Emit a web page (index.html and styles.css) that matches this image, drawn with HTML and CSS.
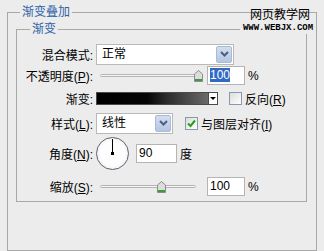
FILE: index.html
```html
<!DOCTYPE html>
<html lang="zh-CN">
<head>
<meta charset="UTF-8" />
<title>渐变叠加</title>
<link rel="stylesheet" href="styles.css">
</head>
<body>
<fieldset class="group outer">
  <legend>渐变叠加</legend>
  <fieldset class="group inner">
    <legend>渐变</legend>

    <div class="row row-blend">
      <span class="lbl">混合模式:</span>
      <div class="select select-blend">
        <span class="select-text">正常</span>
        <span class="drop"><svg width="9" height="6" viewBox="0 0 9 6"><path d="M1 1 L4.5 4.5 L8 1" fill="none" stroke="#4d5f80" stroke-width="2"/></svg></span>
      </div>
    </div>

    <div class="row row-opacity">
      <span class="lbl">不透明度(<u>P</u>):</span>
      <div class="slider">
        <div class="track"></div>
        <svg class="thumb" style="left:98px" width="9" height="12" viewBox="0 0 9 12">
          <path d="M0.5 4 L4.5 0.5 L8.5 4 L8.5 11.5 L0.5 11.5 Z" fill="#dcdcdc" stroke="#8c8c8c"/>
          <rect x="1" y="9" width="7" height="2" fill="#3c9c3c"/>
        </svg>
      </div>
      <div class="textbox"><span class="sel">100</span></div>
      <span class="unit">%</span>
    </div>

    <div class="row row-gradient">
      <span class="lbl">渐变:</span>
      <div class="swatch"></div>
      <div class="swatch-drop"><span class="tri"></span></div>
      <span class="check"></span>
      <span class="check-label">反向(<u>R</u>)</span>
    </div>

    <div class="row row-style">
      <span class="lbl">样式(<u>L</u>):</span>
      <div class="select select-style">
        <span class="select-text">线性</span>
        <span class="drop"><svg width="9" height="6" viewBox="0 0 9 6"><path d="M1 1 L4.5 4.5 L8 1" fill="none" stroke="#4d5f80" stroke-width="2"/></svg></span>
      </div>
      <span class="check checked"><svg width="11" height="11" viewBox="0 0 11 11"><path d="M2 5.5 L4.5 8 L9 2.5" fill="none" stroke="#22a022" stroke-width="2"/></svg></span>
      <span class="check-label">与图层对齐(<u>I</u>)</span>
    </div>

    <div class="row row-angle">
      <span class="lbl">角度(<u>N</u>):</span>
      <div class="dial"><span class="hand"></span><span class="pivot"></span></div>
      <div class="textbox angle-box">90</div>
      <span class="unit">度</span>
    </div>

    <div class="row row-scale">
      <span class="lbl">缩放(<u>S</u>):</span>
      <div class="slider">
        <div class="track"></div>
        <svg class="thumb" style="left:61px" width="9" height="12" viewBox="0 0 9 12">
          <path d="M0.5 4 L4.5 0.5 L8.5 4 L8.5 11.5 L0.5 11.5 Z" fill="#dcdcdc" stroke="#8c8c8c"/>
          <rect x="1" y="9" width="7" height="2" fill="#3c9c3c"/>
        </svg>
      </div>
      <div class="textbox">100</div>
      <span class="unit">%</span>
    </div>
  </fieldset>
</fieldset>

<div class="watermark">
  <div class="wm-cn">网页教学网</div>
  <div class="wm-en">WWW.WEBJX.COM</div>
</div>
</body>
</html>
```

FILE: styles.css
```css
/* Reset & base */
* {
  box-sizing: border-box;
}
html, body {
  margin: 0;
  height: 100%;
  overflow: hidden;
}
body {
  position: relative;
  background: #ececec;
  font: 12px "Liberation Sans", "Noto Sans CJK SC", sans-serif;
  color: #000;
}

/* Group boxes */
.group {
  margin: 0;
  padding: 0;
  min-width: 0;
  border: 1px solid #a8a8a8;
}
.group > legend {
  padding: 0 2px;
  line-height: 16px;
  color: #2c62a8;
}
.outer {
  margin: 4px 0 0 7px;
  width: 310px;
  height: 247px;
}
.outer > legend {
  margin-left: 12px;
}
.inner {
  margin: 1px 0 0 8px;
  width: 291px;
  padding: 6px 0 5px;
}
.inner > legend {
  margin-left: 13px;
}

/* Rows */
.row {
  display: flex;
  align-items: center;
}
.lbl {
  width: 76px;
  margin-right: 3px;
  text-align: right;
  white-space: nowrap;
}
.row-blend { height: 22px; }
.row-opacity { height: 19px; margin-top: 1px; }
.row-gradient { height: 14px; margin-top: 6px; }
.row-style { height: 22px; margin-top: 7px; }
.row-angle { height: 35px; margin-top: 2px; }
.row-scale { height: 19px; margin-top: 6px; }

/* Select boxes */
.select {
  display: flex;
  align-items: stretch;
  height: 21px;
  background: #fff;
  border: 1px solid #b9b9b9;
}
.select-blend { width: 138px; }
.select-style { width: 77px; }
.select-text {
  flex: 1;
  padding-left: 5px;
  line-height: 19px;
}
.drop {
  width: 16px;
  margin: 1px;
  display: flex;
  align-items: center;
  justify-content: center;
  background: linear-gradient(#d3ddf0, #b5c6e2);
  border: 1px solid #a9bbd8;
  border-radius: 2px;
}

/* Sliders */
.slider {
  position: relative;
  width: 108px;
  height: 19px;
}
.track {
  position: absolute;
  left: 4px;
  top: 8px;
  width: 96px;
  height: 3px;
  background: #f6f6f6;
  border: 1px solid #b4b4b4;
  border-radius: 2px;
}
.thumb {
  position: absolute;
  top: 4px;
}

/* Text fields */
.textbox {
  width: 38px;
  height: 19px;
  margin-left: 3px;
  padding-left: 2px;
  background: #fff;
  border: 1px solid #b4b4b4;
  line-height: 17px;
}
.sel {
  background: #316ac5;
  color: #fff;
}
.angle-box {
  width: 41px;
  margin-left: 7px;
}
.unit {
  margin-left: 3px;
}

/* Gradient swatch */
.swatch {
  width: 113px;
  height: 13px;
  border: 1px solid #4a4a4a;
  background: linear-gradient(to right, #000 0%, #050505 45%, #2a2a2a 62%, #6a6a6a 100%);
}
.swatch-drop {
  width: 10px;
  height: 13px;
  margin-left: -1px;
  display: flex;
  align-items: center;
  justify-content: center;
  background: #fff;
  border: 1px solid #4a4a4a;
}
.tri {
  width: 0;
  height: 0;
  border-left: 3px solid transparent;
  border-right: 3px solid transparent;
  border-top: 3px solid #000;
}

/* Checkboxes */
.check {
  width: 13px;
  height: 13px;
  margin-left: 11px;
  display: flex;
  align-items: center;
  justify-content: center;
  background: linear-gradient(135deg, #dcdcd7, #fff);
  border: 1px solid #8798b0;
}
.row-style .check {
  margin-left: 12px;
}
.check-label {
  margin-left: 3px;
  white-space: nowrap;
}

/* Angle dial */
.dial {
  position: relative;
  width: 33px;
  height: 33px;
  border: 1.5px solid #5f6270;
  border-radius: 50%;
  background: radial-gradient(circle, #fdfdfd 55%, #e2e2e2 100%);
}
.hand {
  position: absolute;
  left: 15px;
  top: 1px;
  width: 1px;
  height: 14px;
  background: #000;
}
.pivot {
  position: absolute;
  left: 14px;
  top: 14px;
  width: 3px;
  height: 3px;
  background: #000;
}

/* Watermark overlay */
.watermark {
  position: absolute;
  left: 240px;
  top: 9px;
  width: 76px;
  text-align: center;
}
.wm-cn {
  font-size: 12px;
  line-height: 13px;
  padding-left: 4px;
}
.wm-en {
  margin-top: 1px;
  padding: 1px 0 2px;
  background: #ececec;
  font: bold 9px "Liberation Mono", monospace;
  line-height: 8px;
}
```
